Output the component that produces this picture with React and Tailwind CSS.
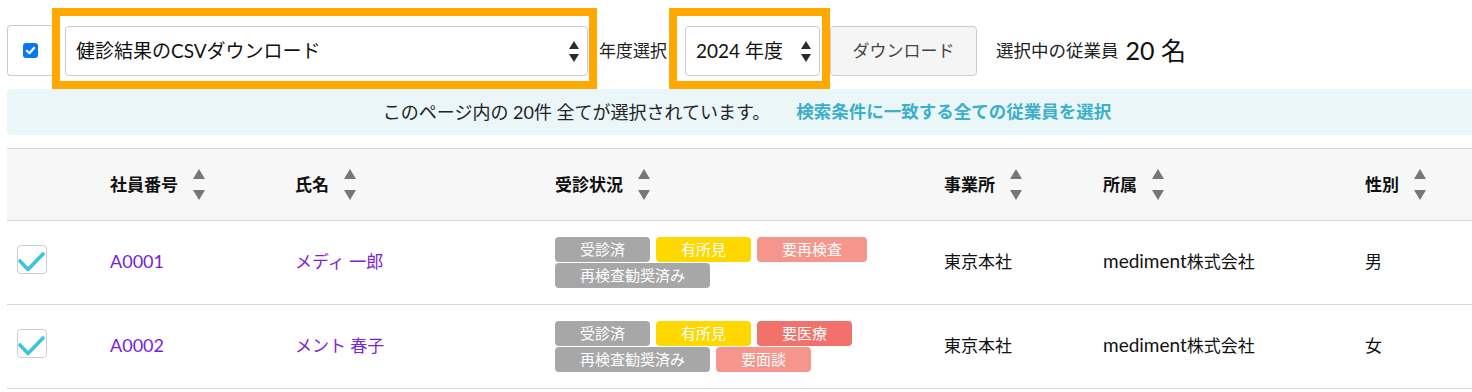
import React from "react";

const FONT = "font-['Lato','Noto_Sans_CJK_JP',sans-serif]";

function SelectArrows() {
  return (
    <svg width="10" height="21" viewBox="0 0 10 21" className="shrink-0">
      <polygon points="5,0 10,8 0,8" fill="#2b2b2b" />
      <polygon points="0,13 10,13 5,21" fill="#2b2b2b" />
    </svg>
  );
}

function SortArrows() {
  return (
    <svg width="12" height="32" viewBox="0 0 12 32" className="shrink-0 ml-[15px]">
      <polygon points="6,0 12,10 0,10" fill="#777777" />
      <polygon points="0,21 12,21 6,31" fill="#777777" />
    </svg>
  );
}

function RowCheck() {
  return (
    <div className="w-[30px] h-[29px] border border-[#cfcfcf] rounded-[4px] bg-white mb-[7px] relative">
      <svg width="30" height="29" viewBox="0 0 30 29" className="absolute left-[-1px] top-[-1px]">
        <polyline points="3,16 11,24.5 26,9" fill="none" stroke="#3ec3de" strokeWidth="3.6" strokeLinecap="round" strokeLinejoin="round" />
      </svg>
    </div>
  );
}

const badgeColors = {
  gray: "bg-[#a7a7a7]",
  yellow: "bg-[#ffd800]",
  pink: "bg-[#f5958b]",
  red: "bg-[#f2716a]",
};

function Badge({ color, children }) {
  return (
    <span className={`${badgeColors[color]} h-[25px] px-[25px] rounded-[4px] text-white text-[15px] leading-[25px] flex items-center`}>
      {children}
    </span>
  );
}

const headers = ["社員番号", "氏名", "受診状況", "事業所", "所属", "性別"];

const rows = [
  {
    id: "A0001",
    name: "メディ 一郎",
    badges: [
      ["gray", "受診済"],
      ["yellow", "有所見"],
      ["pink", "要再検査"],
      ["gray", "再検査勧奨済み"],
    ],
    office: "東京本社",
    sex: "男",
  },
  {
    id: "A0002",
    name: "メント 春子",
    badges: [
      ["gray", "受診済"],
      ["yellow", "有所見"],
      ["red", "要医療"],
      ["gray", "再検査勧奨済み"],
      ["pink", "要面談"],
    ],
    office: "東京本社",
    sex: "女",
  },
];

const GRID = "grid grid-cols-[88px_185px_260px_389px_159px_262px_137px]";

export default function App() {
  return (
    <div className={`w-[1472px] h-[392px] overflow-hidden bg-white text-[#222] ${FONT}`}>
      <div className="w-[1480px] ml-[7px]">
        {/* top controls */}
        <div className="flex items-start mt-[8px] h-[81px]">
          <div className="mt-[17px] w-[45px] h-[51px] border border-r-0 border-[#cccccc] rounded-l-[4px] flex items-center pl-[15px]">
            <span className="w-[15px] h-[15px] rounded-[3px] bg-[#0a75f5] flex items-center justify-center">
              <svg width="11" height="11" viewBox="0 0 11 11">
                <polyline points="1.8,5.8 4.4,8.3 9.2,2.8" fill="none" stroke="white" strokeWidth="2.2" strokeLinecap="round" strokeLinejoin="round" />
              </svg>
            </span>
          </div>
          <div className="w-[545px] h-[81px] border-[8px] border-[#ffa800] pt-[10px] pl-[5px]">
            <div className="w-[523px] h-[50px] border border-[#cccccc] rounded-[4px] bg-white flex items-center justify-between pl-[10px] pr-[8px]">
              <span className="text-[19px] text-[#111]">健診結果のCSVダウンロード</span>
              <SelectArrows />
            </div>
          </div>
          <div className="w-[72px] h-[50px] mt-[18px] pl-[2px] flex items-center text-[17px] text-[#222]">年度選択</div>
          <div className="w-[161px] h-[81px] border-[8px] border-[#ffa800] pt-[10px] pl-[8px]">
            <div className="w-[135px] h-[50px] border border-[#cccccc] rounded-[4px] bg-white flex items-center justify-between pl-[10px] pr-[8px]">
              <span className="text-[19px] text-[#111]">2024 年度</span>
              <SelectArrows />
            </div>
          </div>
          <div className="w-[147px] h-[50px] mt-[18px] border border-[#cccccc] rounded-[4px] bg-[#f5f5f5] flex items-center justify-center text-[17px] text-[#444]">
            ダウンロード
          </div>
          <div className="h-[50px] mt-[18px] ml-[19px] flex items-center">
            <span className="text-[17.5px] text-[#222]">選択中の従業員</span>
            <span className="text-[25px] text-[#111] ml-[7px]">20 名</span>
          </div>
        </div>

        {/* info bar */}
        <div className="w-[1480px] h-[46px] bg-[#ebf6f8] rounded-[4px] flex items-center justify-center">
          <span className="text-[18px] text-[#222]">このページ内の 20件 全てが選択されています。</span>
          <span className="ml-[26px] text-[17.5px] font-bold text-[#3db0c9]">検索条件に一致する全ての従業員を選択</span>
        </div>

        {/* table */}
        <div className="mt-[13px] border-t border-[#d5d5d5]">
          <div className={`${GRID} h-[72px] bg-[#f7f7f7] border-b border-[#d5d5d5]`}>
            <div />
            {headers.map((h) => (
              <div key={h} className="pl-[15px] flex items-center">
                <span className="text-[17px] font-bold text-[#111]">{h}</span>
                <SortArrows />
              </div>
            ))}
          </div>
          {rows.map((r) => (
            <div key={r.id} className={`${GRID} h-[84px] border-b border-[#d5d5d5] text-[17px]`}>
              <div className="pl-[10px] flex items-center">
                <RowCheck />
              </div>
              <div className="pl-[15px] pb-[2px] flex items-center text-[18px] text-[#7b22d8]">{r.id}</div>
              <div className="pl-[15px] pb-[2px] flex items-center text-[#7b22d8]">{r.name}</div>
              <div className="pl-[15px] flex items-center">
                <div className="flex flex-wrap gap-x-[6px] gap-y-[1px] w-[374px]">
                  {r.badges.map(([c, t], i) => (
                    <Badge key={i} color={c}>{t}</Badge>
                  ))}
                </div>
              </div>
              <div className="pl-[15px] pb-[2px] flex items-center text-[#111]">{r.office}</div>
              <div className="pl-[15px] pb-[2px] flex items-center text-[#111]">
                <span className="text-[19px]">mediment</span>
                <span>株式会社</span>
              </div>
              <div className="pl-[15px] pb-[2px] flex items-center text-[#111]">{r.sex}</div>
            </div>
          ))}
        </div>
      </div>
    </div>
  );
}
